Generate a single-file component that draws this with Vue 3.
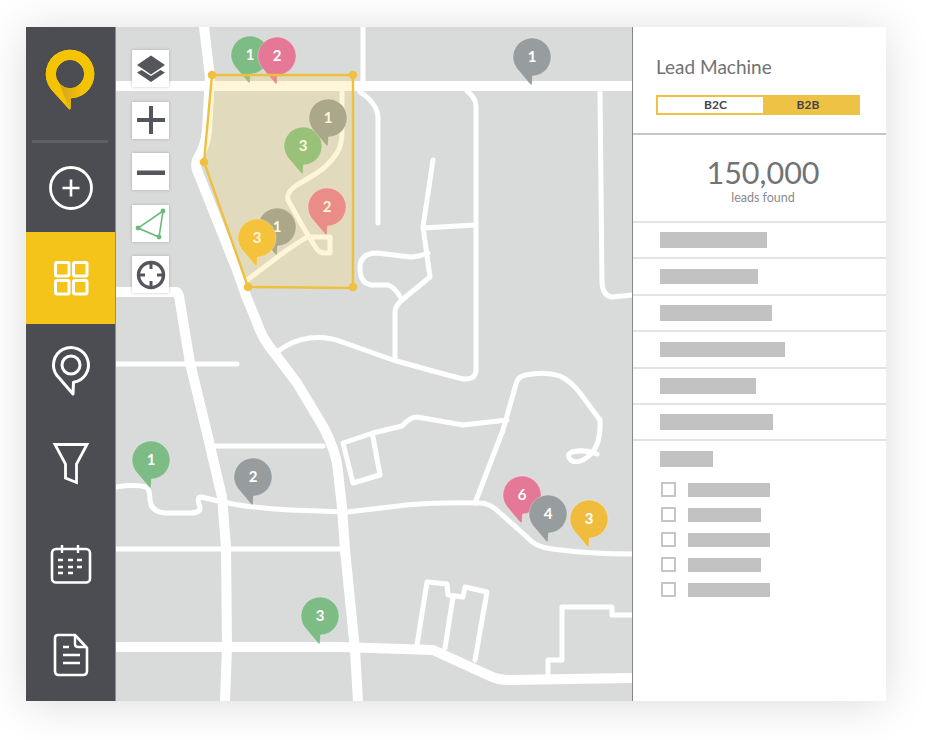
<script setup>
const pins = [
  { x: 250, y: 55, n: 1, c: '#7dbc85' },
  { x: 277, y: 56, n: 2, c: '#e47896' },
  { x: 532, y: 57, n: 1, c: '#979d9f' },
  { x: 303, y: 146, n: 3, c: '#7dbc85' },
  { x: 328, y: 118, n: 1, c: '#949a9c' },
  { x: 327, y: 207, n: 2, c: '#e47896' },
  { x: 277, y: 227, n: 1, c: '#949a9c' },
  { x: 257, y: 238, n: 3, c: '#f2bd35' },
  { x: 151, y: 460, n: 1, c: '#7dbc85' },
  { x: 253, y: 477, n: 2, c: '#979d9f' },
  { x: 320, y: 616, n: 3, c: '#7dbc85' },
  { x: 522, y: 495, n: 6, c: '#e47896' },
  { x: 548, y: 514, n: 4, c: '#979d9f' },
  { x: 589, y: 519, n: 3, c: '#efbc3d' }
]
const thickRoads = [
  'M204 27 L210 77 L207 130 Q206 145 198 158 Q195 163 197 170 L237 270 Q245 295 256 320 Q262 338 272 350 L297 383 L318 418 Q332 440 337 463 L342 507 L345 550 L355 650 L358 701',
  'M116 292 H176 Q178 292 179 296 L190 363 L207 433 L222 497 L226 547 L227 647 L225 701',
  'M116 86 H632',
  'M116 647 H340 L433 650 L490 676 Q498 680 510 680 L632 678'
]
const thinRoads = [
  'M363 27 V86',
  'M116 364 H237',
  'M277 352 Q292 340 310 338 Q328 336 345 343 L393 360 L440 373 L463 379 Q476 380 476 370 V106 Q476 98 467 91',
  'M395 360 V312 Q395 306 402 300 L430 277 L423 227 L433 160',
  'M423 228 L475 225',
  'M428 253 Q418 257 410 257 L377 253 Q360 253 360 268 Q360 284 372 285 H388 Q396 288 402 300',
  'M360 92 Q378 104 378 118 V223',
  'M213 446 H323',
  'M116 487 Q135 484 146 487 Q150 489 150 500 Q151 512 165 513 H190 Q201 513 200 507 Q196 497 201 497 L223 502 Q250 508 290 510 L347 512 L407 505 Q440 502 480 503 Q490 503 500 513 L527 537 Q535 547 552 549 Q590 554 632 554',
  'M475 503 L503 430 L516 384 Q518 376 526 375 Q545 371 560 376 Q572 382 580 393 L600 420 Q601 445 590 455 Q580 464 572 461 Q565 455 572 452 Q585 449 597 454',
  'M507 420 L463 425 L417 417 Q410 417 402 426 L373 433 L343 443 L353 483 L380 475 L373 437',
  'M417 645 L427 582 L447 584 L448 595 L463 597 L465 587 L487 592 L475 660',
  'M453 597 L445 648',
  'M116 549 H346',
  'M600 92 L602 283 Q603 296 612 297 L632 295',
  'M548 677 V660 H562 V607 H612 V615 H632',
  'M342 92 V133 Q342 145 337 153 Q328 166 317 173 L297 185 Q286 192 288 200 L303 227 L316 248 Q319 253 325 253 H330 V237 H307 L287 250 L247 280'
]
const bars = [107, 98, 112, 125, 96, 113]
const options = [82, 73, 82, 73, 82]
</script>

<template>
  <div class="page">
    <div class="card">
      <nav class="side">
        <div class="logo">
          <svg width="60" height="80" viewBox="-30 -35 60 80">
            <defs>
              <linearGradient id="fold" x1="0" y1="0" x2="1" y2="0">
                <stop offset="0.15" stop-color="#d8a61c" />
                <stop offset="0.9" stop-color="#f5c400" />
              </linearGradient>
            </defs>
            <path d="M1 25 A25 25 0 1 0 -19.5 15.6 L-1 36 Q0.8 37 1 35 Z" fill="#f5c400" stroke="#3f4358" stroke-width="1" />
            <path d="M-12.5 5 L-1 34 L1 35 L1 24 Q10 23 16 14 L10 9 A13.5 13.5 0 0 1 -12.5 5 Z" fill="url(#fold)" />
            <circle cx="0" cy="0" r="13.5" fill="#4c4d53" stroke="#3f4358" stroke-width="1" />
          </svg>
        </div>
        <div class="rule"></div>
        <div class="item add">
          <svg width="46" height="46" viewBox="0 0 46 46" class="line">
            <circle cx="23" cy="23" r="20.5" stroke-width="2.8" />
            <path d="M14.5 23 H31.5 M23 14.5 V31.5" stroke-width="2.6" />
          </svg>
        </div>
        <div class="item active">
          <svg width="36" height="36" viewBox="0 0 36 36" class="line">
            <rect x="2.5" y="2.5" width="13.5" height="13.5" rx="1.5" stroke-width="3" />
            <rect x="20.5" y="2.5" width="13.5" height="13.5" rx="1.5" stroke-width="3" />
            <rect x="2.5" y="20.5" width="13.5" height="13.5" rx="1.5" stroke-width="3" />
            <rect x="20.5" y="20.5" width="13.5" height="13.5" rx="1.5" stroke-width="3" />
          </svg>
        </div>
        <div class="item pin">
          <svg width="44" height="56" viewBox="-22 -21 44 56" class="line">
            <path d="M2.5 17.3 A17.5 17.5 0 1 0 -14 10.5 L2 29 Z" stroke-width="3" stroke-linejoin="round" />
            <circle cx="0" cy="0" r="9" stroke-width="3" />
          </svg>
        </div>
        <div class="item funnel">
          <svg width="38" height="44" viewBox="51 442 38 44" class="line">
            <path d="M54 444.5 H86 L75.5 464 V482.5 L64.5 478 V464 Z" stroke-width="2.8" stroke-linejoin="miter" />
          </svg>
        </div>
        <div class="item calendar">
          <svg width="44" height="42" viewBox="49 543 44 42" class="line">
            <rect x="52" y="549" width="38" height="33.5" rx="4" stroke-width="2.6" />
            <path d="M62 545 V553 M78 545 V553" stroke-width="2.4" />
            <path d="M58 560 H63 M68 560 H73 M77 560 H82 M58 567 H63 M68 567 H73 M77 567 H82 M58 573 H63 M68 573 H73" stroke-width="2.4" />
          </svg>
        </div>
        <div class="item doc">
          <svg width="38" height="46" viewBox="51 632 38 46" class="line">
            <path d="M57 635 H74 L86 648 V671 Q86 675 82 675 H58 Q54 675 54 671 V638 Q54 635 57 635 Z" stroke-width="2.6" stroke-linejoin="round" />
            <path d="M74 636 V644 Q74 647 77 647 H85" stroke-width="2.4" />
            <path d="M62 647 H68 M62 655 H79 M62 663 H79" stroke-width="2.4" />
          </svg>
        </div>
      </nav>

      <main class="map">
        <svg class="canvas" viewBox="116 27 516 674" preserveAspectRatio="none">
          <g fill="none" stroke="#fff" stroke-linecap="round" stroke-linejoin="round">
            <path v-for="d in thickRoads" :key="d" :d="d" stroke-width="10" />
            <path v-for="d in thinRoads" :key="d" :d="d" stroke-width="5" />
          </g>
          <g v-for="(p, i) in pins" :key="i" :transform="`translate(${p.x} ${p.y})`">
            <path d="M0.5 19 A19 19 0 1 0 -15.5 11 L-2 27 Q-0.5 28.5 0 27 Z" :fill="p.c" stroke="#fff" stroke-opacity="0.35" stroke-width="0.8" />
            <text class="pin-num" text-anchor="middle" y="5.2">{{ p.n }}</text>
          </g>
          <polygon points="212,75 353,75 353,288 248,287 204,162" fill="#fdd753" fill-opacity="0.22" stroke="#eec040" stroke-width="2.4" stroke-linejoin="round" />
          <g fill="#f0c03e">
            <circle cx="212" cy="75" r="4.3" />
            <circle cx="353" cy="75" r="4.3" />
            <circle cx="353" cy="287" r="4.3" />
            <circle cx="248" cy="287" r="4.3" />
            <circle cx="204" cy="162" r="4.3" />
          </g>
        </svg>

        <div class="tools">
          <button class="tool">
            <svg width="37" height="37" viewBox="0 0 37 37" fill="#55565b">
              <polygon points="19,5.5 33,15 19,24.5 5,15" />
              <polygon points="5,22.5 9.5,20 19,26 28.5,20 33,22.5 19,32" />
            </svg>
          </button>
          <button class="tool">
            <svg width="37" height="37" viewBox="0 0 37 37" fill="#55565b">
              <rect x="5" y="16" width="28" height="4" />
              <rect x="17" y="4" width="4" height="28" />
            </svg>
          </button>
          <button class="tool">
            <svg width="37" height="37" viewBox="0 0 37 37" fill="#55565b">
              <rect x="5" y="17.5" width="28" height="4.5" />
            </svg>
          </button>
          <button class="tool">
            <svg width="37" height="37" viewBox="0 0 37 37">
              <polygon points="31,6 6,23 27,32" fill="none" stroke="#6cb97d" stroke-width="1.6" />
              <g fill="#6cb97d">
                <circle cx="31" cy="6" r="2.4" />
                <circle cx="6" cy="23" r="2.4" />
                <circle cx="27" cy="32" r="2.4" />
              </g>
            </svg>
          </button>
          <button class="tool">
            <svg width="37" height="37" viewBox="0 0 37 37" fill="none" stroke="#55565b">
              <circle cx="19" cy="19" r="12.5" stroke-width="3.4" />
              <path d="M19 6 V13 M19 25 V32 M6 19 H13 M25 19 H32" stroke-width="3" />
            </svg>
          </button>
        </div>
      </main>

      <aside class="panel">
        <header class="head">
          <h1 class="title">Lead Machine</h1>
          <div class="toggle">
            <span class="opt off">B2C</span>
            <span class="opt on">B2B</span>
          </div>
        </header>
        <section class="count">
          <div class="num">150,000</div>
          <div class="sub">leads found</div>
        </section>
        <div v-for="(w, i) in bars" :key="i" class="row">
          <span class="bar" :style="{ width: w + 'px' }"></span>
        </div>
        <section class="filters">
          <span class="bar filter-title"></span>
          <div v-for="(w, i) in options" :key="i" class="check">
            <span class="box"></span>
            <span class="bar small" :style="{ width: w + 'px' }"></span>
          </div>
        </section>
      </aside>
    </div>
  </div>
</template>

<style>
html, body { margin: 0; background: #fff; }
</style>

<style scoped>
.page {
  width: 926px;
  height: 740px;
  overflow: hidden;
  padding: 27px 0 0 26px;
  box-sizing: border-box;
  font-family: Lato, "Liberation Sans", sans-serif;
}
.card {
  display: flex;
  width: 860px;
  height: 674px;
  background: #fff;
  box-shadow: 0 3px 42px rgba(0, 0, 0, 0.14);
}
.side {
  width: 89px;
  flex: none;
  background: #4c4d53;
  display: flex;
  flex-direction: column;
}
.logo {
  height: 113px;
  display: flex;
  align-items: flex-start;
  justify-content: center;
  padding: 12px 1px 0 0;
  box-sizing: border-box;
}
.rule {
  height: 3px;
  margin: 0 7px 0 6px;
  background: #5f6066;
  flex: none;
}
.item {
  display: flex;
  align-items: center;
  justify-content: center;
  flex: none;
}
.line { fill: none; stroke: #fff; }
.add { height: 89px; }
.active { height: 92px; background: #f4c41b; }
.pin { height: 95px; }
.funnel { height: 90px; }
.calendar { height: 110px; }
.doc { height: 72px; }
.map {
  position: relative;
  width: 518px;
  flex: none;
  background: #d9dbdb;
  border-left: 1px solid #8d8e91;
  border-right: 1.5px solid #85868a;
  box-sizing: border-box;
}
.canvas { display: block; width: 100%; height: 100%; }
.pin-num {
  fill: #fff;
  font-family: Lato, "Liberation Sans", sans-serif;
  font-weight: 700;
  font-size: 15px;
}
.tools {
  position: absolute;
  left: 16px;
  top: 23px;
  display: flex;
  flex-direction: column;
  gap: 14.5px;
}
.tool {
  width: 37px;
  height: 37px;
  padding: 0;
  border: 0;
  background: #fff;
  box-shadow: 0 0 3px rgba(0, 0, 0, 0.22);
  display: block;
}
.tool svg { display: block; }
.panel {
  width: 253px;
  flex: none;
  display: flex;
  flex-direction: column;
}
.head {
  height: 108px;
  padding: 28px 0 0 23px;
  box-sizing: border-box;
  border-bottom: 2px solid #c6c6c6;
}
.title {
  margin: 0;
  font-size: 19px;
  line-height: 24px;
  font-weight: 400;
  color: #707173;
}
.toggle {
  display: flex;
  width: 204px;
  height: 20px;
  margin-top: 16px;
  box-sizing: border-box;
  border: 2px solid #eec245;
}
.opt {
  text-align: center;
  font-size: 12px;
  font-weight: 700;
  line-height: 16px;
  color: #44454c;
  box-sizing: border-box;
}
.opt.off { width: 105px; padding-left: 10px; }
.opt.on { flex: 1; padding-right: 5px; background: #eec245; }
.count {
  height: 88px;
  box-sizing: border-box;
  border-bottom: 2px solid #e4e4e4;
  text-align: center;
  padding-top: 19px;
  padding-left: 7px;
}
.num {
  font-size: 30.5px;
  line-height: 36px;
  font-weight: 400;
  color: #727375;
}
.sub {
  font-size: 12.5px;
  line-height: 14px;
  margin-top: 1px;
  color: #8a8b8d;
}
.row {
  height: 36.4px;
  box-sizing: border-box;
  border-bottom: 2px solid #e4e4e4;
  padding-left: 27px;
  display: flex;
  align-items: center;
}
.bar {
  display: block;
  height: 15.5px;
  background: #c2c2c2;
}
.filters { padding: 10px 0 0 27px; }
.filter-title { width: 53px; }
.check {
  display: flex;
  align-items: center;
  gap: 12px;
  height: 15px;
  margin-bottom: 10px;
}
.filter-title + .check { margin-top: 15.5px; }
.box {
  width: 15px;
  height: 15px;
  margin-left: 1px;
  box-sizing: border-box;
  border: 2px solid #c5c5c5;
  background: #fff;
}
.bar.small { height: 14px; }
</style>
